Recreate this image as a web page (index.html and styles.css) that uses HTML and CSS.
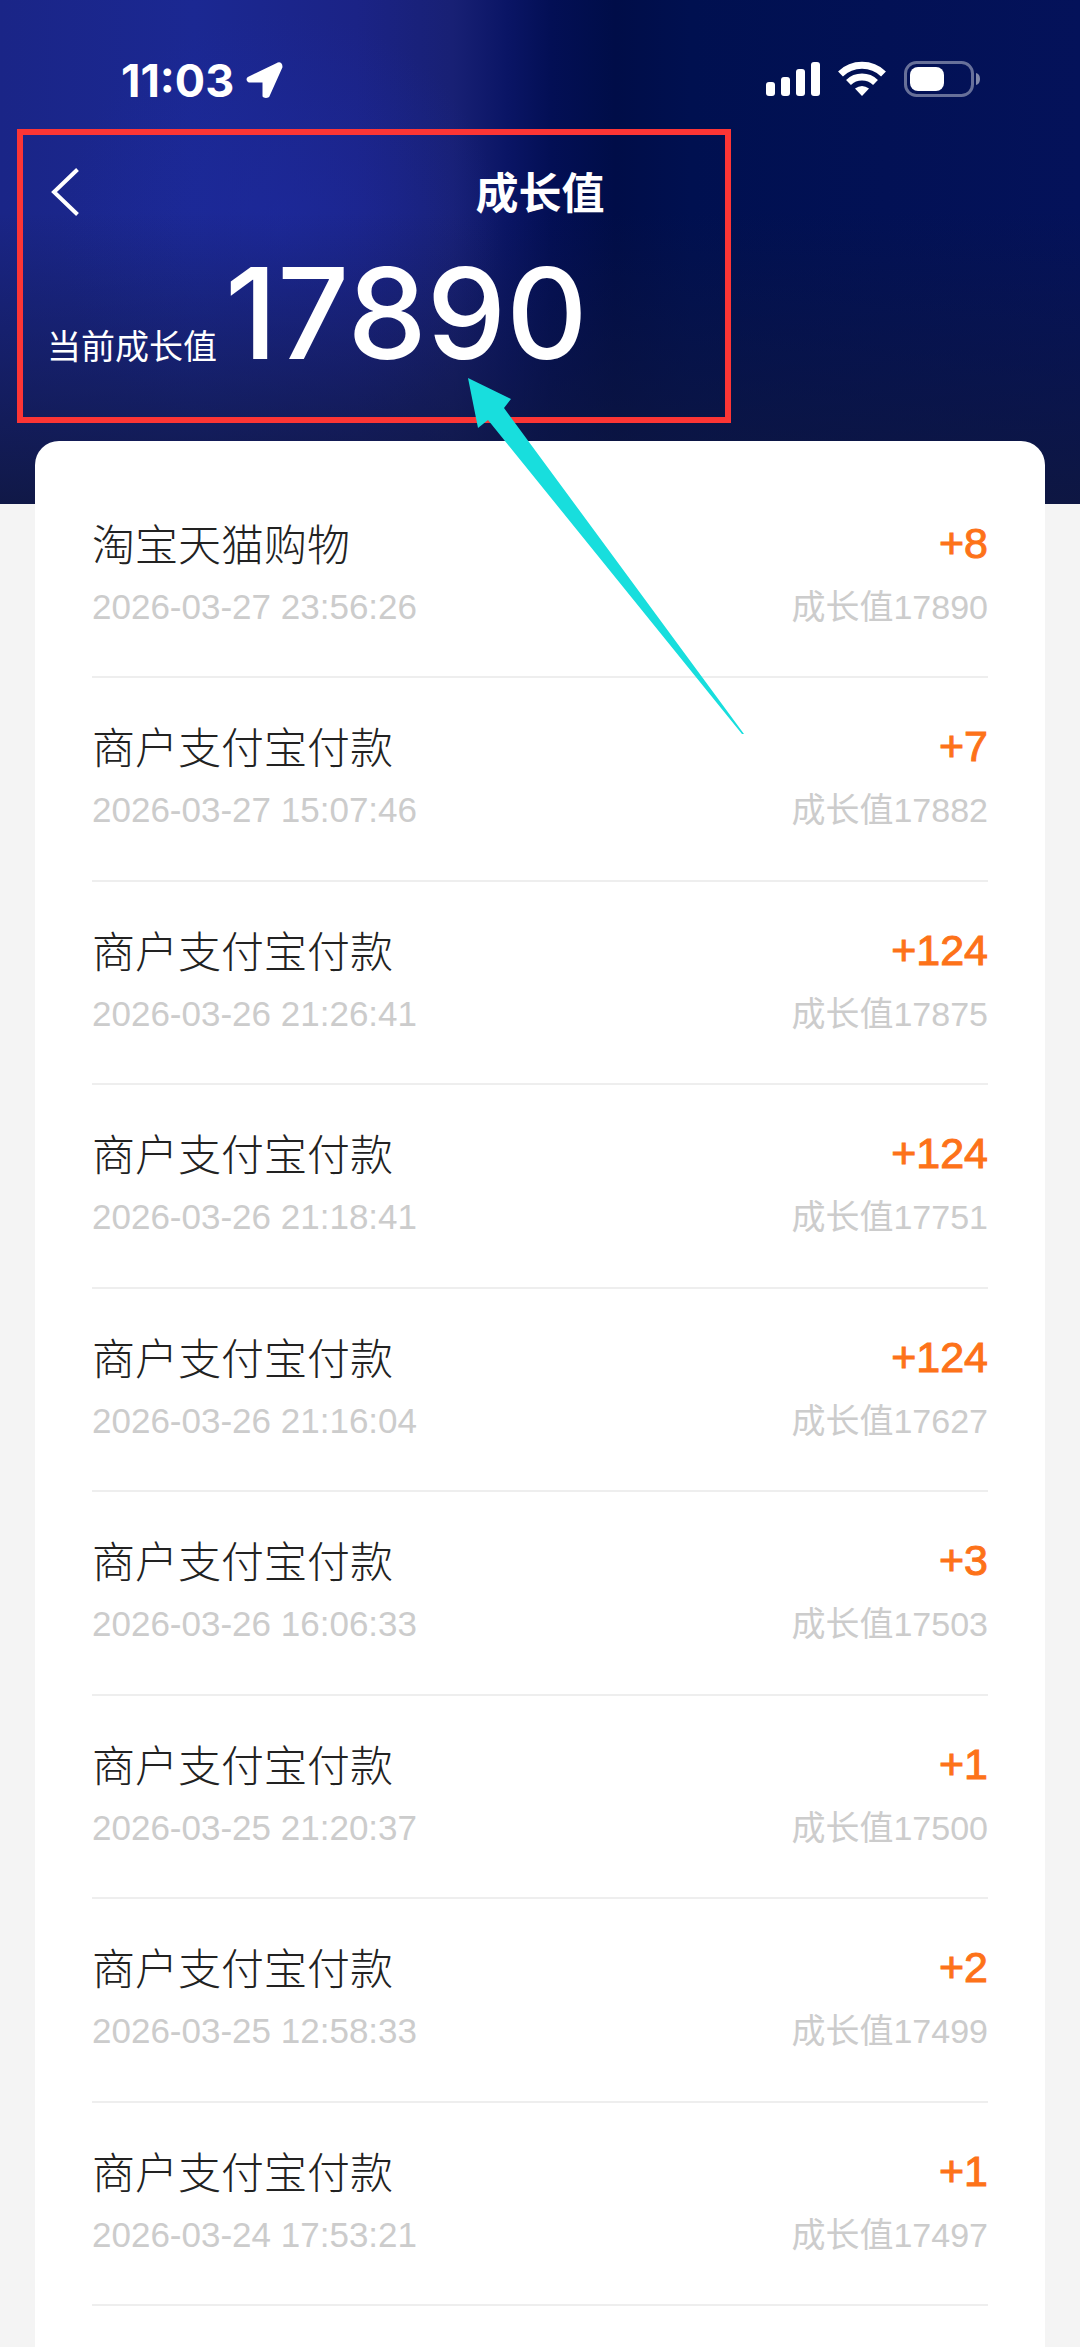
FILE: index.html
```html
<!DOCTYPE html>
<html lang="zh-CN">
<head>
    <meta charset="UTF-8">
    <meta name="viewport" content="width=device-width, initial-scale=1.0">
    <title>成长值</title>
    <link rel="stylesheet" href="styles.css">
</head>
<body>
    <header class="header">
        <div class="status-bar">
            <div class="status-left">
                <span class="time">11:03</span>
                <svg class="location" width="37" height="37" viewBox="0 0 37 37">
                    <path d="M3 16 L32 2 Q35 1 35 5 L22 34 Q20 35 18 34 V19 H3 Q1 17 3 16 Z" fill="#fff" stroke="#fff" stroke-width="3" stroke-linejoin="round"/>
                </svg>
            </div>
            <div class="status-right">
                <svg width="54" height="36" viewBox="0 0 54 36" fill="#fff">
                    <rect x="0" y="21" width="9" height="14" rx="3"/>
                    <rect x="15" y="16" width="9" height="19" rx="3"/>
                    <rect x="30" y="8" width="9" height="27" rx="3"/>
                    <rect x="45" y="1" width="9" height="34" rx="3"/>
                </svg>
                <svg width="48" height="36" viewBox="0 0 48 36" fill="none" stroke="#fff" stroke-width="7">
                    <path d="M2.5 13 A31 31 0 0 1 45.5 13"/>
                    <path d="M10.5 21.5 A19.5 19.5 0 0 1 37.5 21.5"/>
                    <path d="M17 27.5 Q24 22.5 31 27.5 L24 35 Z" fill="#fff" stroke="none"/>
                </svg>
                <svg width="76" height="36" viewBox="0 0 76 36">
                    <rect x="1.5" y="1.5" width="67" height="33" rx="11" fill="none" stroke="#fff" stroke-opacity="0.4" stroke-width="3"/>
                    <rect x="6" y="6" width="34" height="24" rx="8" fill="#fff"/>
                    <path d="M72 12 Q76 13 76 18 Q76 23 72 24 Z" fill="#fff" fill-opacity="0.5"/>
                </svg>
            </div>
        </div>

        <nav class="nav">
            <button class="back" type="button" aria-label="返回">
                <svg width="28" height="48" viewBox="0 0 28 48">
                    <path d="M26.5 1.5 L3 24 L26.5 46.5" fill="none" stroke="#fff" stroke-width="4"/>
                </svg>
            </button>
            <h1 class="title">成长值</h1>
        </nav>

        <div class="summary">
            <span class="summary-label">当前成长值</span>
            <span class="summary-value">17890</span>
        </div>

        <div class="mark-box"></div>
    </header>

    <main class="card">
        <ul class="list">
            <li class="row">
                <div class="line"><span class="name">淘宝天猫购物</span><span class="plus">+8</span></div>
                <div class="line sub"><span>2026-03-27 23:56:26</span><span class="total">成长值17890</span></div>
            </li>
            <li class="row">
                <div class="line"><span class="name">商户支付宝付款</span><span class="plus">+7</span></div>
                <div class="line sub"><span>2026-03-27 15:07:46</span><span class="total">成长值17882</span></div>
            </li>
            <li class="row">
                <div class="line"><span class="name">商户支付宝付款</span><span class="plus">+124</span></div>
                <div class="line sub"><span>2026-03-26 21:26:41</span><span class="total">成长值17875</span></div>
            </li>
            <li class="row">
                <div class="line"><span class="name">商户支付宝付款</span><span class="plus">+124</span></div>
                <div class="line sub"><span>2026-03-26 21:18:41</span><span class="total">成长值17751</span></div>
            </li>
            <li class="row">
                <div class="line"><span class="name">商户支付宝付款</span><span class="plus">+124</span></div>
                <div class="line sub"><span>2026-03-26 21:16:04</span><span class="total">成长值17627</span></div>
            </li>
            <li class="row">
                <div class="line"><span class="name">商户支付宝付款</span><span class="plus">+3</span></div>
                <div class="line sub"><span>2026-03-26 16:06:33</span><span class="total">成长值17503</span></div>
            </li>
            <li class="row">
                <div class="line"><span class="name">商户支付宝付款</span><span class="plus">+1</span></div>
                <div class="line sub"><span>2026-03-25 21:20:37</span><span class="total">成长值17500</span></div>
            </li>
            <li class="row">
                <div class="line"><span class="name">商户支付宝付款</span><span class="plus">+2</span></div>
                <div class="line sub"><span>2026-03-25 12:58:33</span><span class="total">成长值17499</span></div>
            </li>
            <li class="row">
                <div class="line"><span class="name">商户支付宝付款</span><span class="plus">+1</span></div>
                <div class="line sub"><span>2026-03-24 17:53:21</span><span class="total">成长值17497</span></div>
            </li>
        </ul>
    </main>

    <svg class="mark-arrow" width="276" height="356" viewBox="0 0 276 356">
        <polygon points="0,0 43,21 36,30 276,356 274,356 20,42 10,50" fill="#18dedd"/>
    </svg>
</body>
</html>
```

FILE: styles.css
```css
* {
    box-sizing: border-box;
}

body {
    margin: 0;
    min-height: 100vh;
    display: flex;
    flex-direction: column;
    position: relative;
    background-color: #f4f4f4;
    font-family: "Liberation Sans", "Noto Sans CJK SC", sans-serif;
}

.header {
    position: relative;
    padding-bottom: 126px;
    color: white;
    background:
        linear-gradient(to bottom, rgba(15, 23, 64, 0) 42%, rgba(15, 23, 64, 0.5) 75%, rgba(15, 23, 64, 0.9) 100%),
        radial-gradient(circle at 26% 46%, rgba(29, 42, 160, 0.6), rgba(29, 42, 160, 0) 220px),
        linear-gradient(to right, #1a2587 0%, #1b2892 18%, #1b2386 33%, #182074 42%, #0a1565 47%, #030f55 51%, #000d48 57%, #001050 64%, #04125a 100%);
}

/* Status bar */
.status-bar {
    height: 129px;
    padding: 32px 100px 0 121px;
    display: flex;
    justify-content: space-between;
}

.status-left,
.status-right {
    height: 96px;
    display: flex;
    align-items: center;
}

.status-left {
    gap: 12px;
}

.status-right {
    gap: 18px;
    padding-bottom: 2px;
}

.time {
    font-family: Inter, sans-serif;
    font-size: 45px;
    font-weight: 700;
}

/* Title bar */
.nav {
    height: 126px;
    position: relative;
    display: flex;
    align-items: center;
    justify-content: center;
}

.back {
    position: absolute;
    left: 51px;
    padding: 0;
    border: none;
    background: none;
    cursor: pointer;
}

.back svg {
    display: block;
}

.title {
    margin: 0;
    padding-bottom: 4px;
    font-size: 43px;
    font-weight: 700;
}

.summary {
    height: 123px;
    padding-left: 47px;
    display: flex;
    align-items: baseline;
    gap: 8px;
}

.summary-label {
    font-size: 34px;
}

.summary-value {
    font-family: Inter, sans-serif;
    font-size: 126px;
    font-weight: 500;
    line-height: 116px;
}

.mark-box {
    position: absolute;
    top: 129px;
    left: 17px;
    width: 714px;
    height: 294px;
    border: 6px solid #fc3535;
}

.mark-arrow {
    position: absolute;
    top: 378px;
    left: 468px;
}

/* Records */
.card {
    position: relative;
    flex: 1;
    display: flex;
    margin: -63px 35px 0;
    padding: 34px 57px 41px;
    background-color: white;
    border-radius: 24px 24px 0 0;
}

.list {
    flex: 1;
    display: grid;
    grid-auto-rows: 1fr;
    margin: 0;
    padding: 0;
    list-style: none;
}

.row {
    padding-top: 38px;
    border-bottom: 2px solid #eeeeee;
}

.line {
    height: 64px;
    line-height: 60px;
    display: flex;
    justify-content: space-between;
    font-size: 43px;
}

.name {
    color: #222222;
    font-weight: 300;
    line-height: 66px;
}

.plus {
    color: #fd7219;
    -webkit-text-stroke: 1px #fd7219;
}

.sub {
    color: #cccccc;
    font-size: 35px;
}

.total {
    font-size: 34px;
}
```
